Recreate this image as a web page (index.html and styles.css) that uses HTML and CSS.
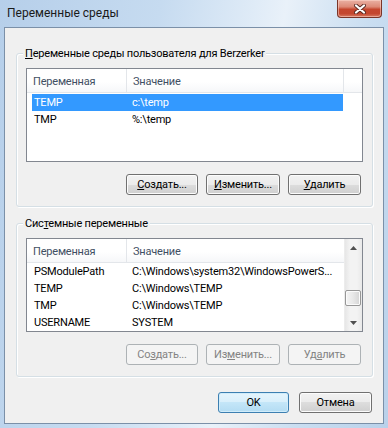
FILE: index.html
```html
<!DOCTYPE html>
<html lang="ru">
<head>
    <meta charset="UTF-8">
    <title>Переменные среды</title>
    <link rel="stylesheet" href="styles.css">
</head>
<body>

<div class="window">
    <div class="titlebar">
        <span class="title">Переменные среды</span>
        <div class="close-btn">
            <svg width="12" height="10" viewBox="0 0 12 10">
                <path d="M2 1.5 L10 8.5 M10 1.5 L2 8.5" stroke="#5a2a22" stroke-width="4" stroke-linecap="round"/>
                <path d="M2 1.5 L10 8.5 M10 1.5 L2 8.5" stroke="#fff" stroke-width="2.2" stroke-linecap="round"/>
            </svg>
        </div>
    </div>

    <div class="client">
        <div class="group">
            <div class="group-title"><u>П</u>еременные среды пользователя для Berzerker</div>

            <div class="list">
                <div class="list-main">
                    <div class="list-header">
                        <div class="hcol c1">Переменная</div>
                        <div class="hcol c2">Значение</div>
                        <div class="hcol rest"></div>
                    </div>
                    <div class="row selected first">
                        <div class="cell c1">TEMP</div>
                        <div class="cell c2">c:\temp</div>
                    </div>
                    <div class="row">
                        <div class="cell c1">TMP</div>
                        <div class="cell c2">%:\temp</div>
                    </div>
                </div>
            </div>

            <div class="btn-row">
                <button class="btn w72"><u>С</u>оздать...</button>
                <button class="btn w74"><u>И</u>зменить...</button>
                <button class="btn w73"><u>У</u>далить</button>
            </div>
        </div>

        <div class="group second">
            <div class="group-title">Сис<u>т</u>емные переменные</div>

            <div class="list">
                <div class="list-main">
                    <div class="list-header">
                        <div class="hcol c1">Переменная</div>
                        <div class="hcol c2 last">Значение</div>
                    </div>
                    <div class="row">
                        <div class="cell c1">PSModulePath</div>
                        <div class="cell c2">C:\Windows\system32\WindowsPowerS...</div>
                    </div>
                    <div class="row">
                        <div class="cell c1">TEMP</div>
                        <div class="cell c2">C:\Windows\TEMP</div>
                    </div>
                    <div class="row">
                        <div class="cell c1">TMP</div>
                        <div class="cell c2">C:\Windows\TEMP</div>
                    </div>
                    <div class="row">
                        <div class="cell c1">USERNAME</div>
                        <div class="cell c2">SYSTEM</div>
                    </div>
                </div>
                <div class="scrollbar">
                    <div class="sb-btn">
                        <svg width="7" height="4" viewBox="0 0 7 4"><path d="M0 4 L3.5 0 L7 4 Z" fill="#505050"/></svg>
                    </div>
                    <div class="sb-track">
                        <div class="sb-thumb"></div>
                    </div>
                    <div class="sb-btn">
                        <svg width="7" height="4" viewBox="0 0 7 4"><path d="M0 0 L7 0 L3.5 4 Z" fill="#505050"/></svg>
                    </div>
                </div>
            </div>

            <div class="btn-row">
                <button class="btn disabled w72">Со<u>з</u>дать...</button>
                <button class="btn disabled w74">Из<u>м</u>енить...</button>
                <button class="btn disabled w73">Уд<u>а</u>лить</button>
            </div>
        </div>

        <div class="dialog-buttons">
            <button class="btn default w71">OK</button>
            <button class="btn w73">Отмена</button>
        </div>
    </div>
</div>

</body>
</html>
```

FILE: styles.css
```css
* {
    box-sizing: border-box;
}

body {
    margin: 0;
    font-family: Roboto, "Liberation Sans", sans-serif;
    font-size: 11px;
    letter-spacing: -0.2px;
    color: #000;
    background-color: #b9d1ea;
}

.window {
    width: 388px;
    height: 428px;
    padding: 0 4px 4px;
    background: linear-gradient(100deg, #b6cfea 0%, #c6dbf0 35%, #dfebf7 55%, #e9f1f9 62%, #cadef1 80%, #b9d1ea 100%);
    display: flex;
    flex-direction: column;
}

.titlebar {
    height: 27px;
    display: flex;
    justify-content: space-between;
    align-items: flex-start;
    padding: 0 2px 0 3px;
}

.title {
    margin-top: 5px;
    font-size: 12px;
    letter-spacing: 0;
    line-height: 17px;
    color: #1a1a1a;
}

.close-btn {
    width: 45px;
    height: 18px;
    border: 1px solid #7a3528;
    border-top: none;
    border-radius: 0 0 4px 4px;
    background: linear-gradient(#eab1a4 0%, #dd8a77 40%, #c5462e 55%, #c4472f 80%, #d77a62 100%);
    box-shadow: inset 0 0 0 1px rgba(255, 220, 210, 0.5);
    display: flex;
    align-items: center;
    justify-content: center;
}

.client {
    height: 397px;
    border: 1px solid #7b90a8;
    background-color: #f0f0f0;
    padding: 0 10px 0 11px;
}

.group {
    margin-top: 25px;
    border: 1px solid #d5dfe5;
    border-radius: 3px;
    box-shadow: inset 1px 1px 0 #fff, 1px 1px 0 #fff;
    padding: 0 9px 11px;
    display: flex;
    flex-direction: column;
}

.group.second {
    margin-top: 16px;
}

.group-title {
    align-self: flex-start;
    margin: -8px 0 0 -3px;
    padding: 0 2px;
    line-height: 15px;
    background-color: #f0f0f0;
}

.list {
    height: 94px;
    margin-top: 7px;
    border: 1px solid #828790;
    background-color: #fff;
    display: flex;
    overflow: hidden;
}

.list-main {
    flex: 1;
    min-width: 0;
}

.list-header {
    display: flex;
    height: 24px;
    border-bottom: 1px solid #e3e6ea;
    background: linear-gradient(#fff 0%, #fff 55%, #f6f7f9 100%);
    color: #3f4f63;
    line-height: 23px;
}

.hcol {
    padding-left: 6px;
    padding-top: 1px;
    border-right: 1px solid #e3e6ea;
    white-space: nowrap;
}

.hcol.c1 {
    width: 100px;
}

.hcol.c2 {
    width: 217px;
}

.hcol.c2.last {
    border-right: none;
}

.hcol.rest {
    flex: 1;
    border-right: none;
}

.row {
    display: flex;
    width: 311px;
    height: 17px;
    margin-left: 5px;
    line-height: 17px;
}

.row.first {
    margin-top: 1px;
}

.row.selected {
    background-color: #3399ff;
    color: #fff;
}

.cell {
    white-space: nowrap;
    overflow: hidden;
    text-overflow: ellipsis;
}

.cell.c1 {
    width: 95px;
    padding-left: 2px;
}

.cell.c2 {
    flex: 1;
    min-width: 0;
    padding-left: 5px;
}

.scrollbar {
    width: 18px;
    display: flex;
    flex-direction: column;
    border-left: 1px solid #ececec;
    background: linear-gradient(90deg, #e6e6e6 0%, #f3f3f3 30%, #f3f3f3 70%, #e9e9e9 100%);
}

.sb-btn {
    height: 17px;
    display: flex;
    align-items: center;
    justify-content: center;
}

.sb-track {
    flex: 1;
    padding-top: 34px;
}

.sb-thumb {
    height: 16px;
    margin: 0 1px 0 0;
    border: 1px solid #979797;
    border-radius: 2px;
    background: linear-gradient(90deg, #f4f4f4 0%, #e8e8e8 50%, #d4d4d4 100%);
    box-shadow: inset 0 0 0 1px #fbfbfb;
}

.btn-row {
    display: flex;
    justify-content: flex-end;
    gap: 8px;
    margin-top: 12px;
    padding-right: 2px;
}

.dialog-buttons {
    display: flex;
    justify-content: flex-end;
    gap: 10px;
    margin-top: 15px;
    padding-right: 1px;
}

.btn {
    height: 21px;
    padding: 0;
    border: 1px solid #707070;
    border-radius: 3px;
    background: linear-gradient(#f2f2f2 0%, #ebebeb 50%, #dddddd 50%, #cfcfcf 100%);
    box-shadow: inset 0 0 0 1px #fcfcfc;
    font-family: inherit;
    font-size: 11px;
    letter-spacing: -0.2px;
    line-height: 19px;
    color: #000;
    text-align: center;
}

.btn.disabled {
    border-color: #adb2b5;
    background: #f4f4f4;
    box-shadow: none;
    color: #838383;
}

.btn.default {
    border-color: #3c7fb1;
    background: linear-gradient(#e5f4fc 0%, #d8effb 50%, #c4e6f8 50%, #b3dcf3 100%);
    box-shadow: inset 0 0 0 1px #d0ecfa;
}

.w71 { width: 71px; }
.w72 { width: 72px; }
.w73 { width: 73px; }
.w74 { width: 74px; }
```
